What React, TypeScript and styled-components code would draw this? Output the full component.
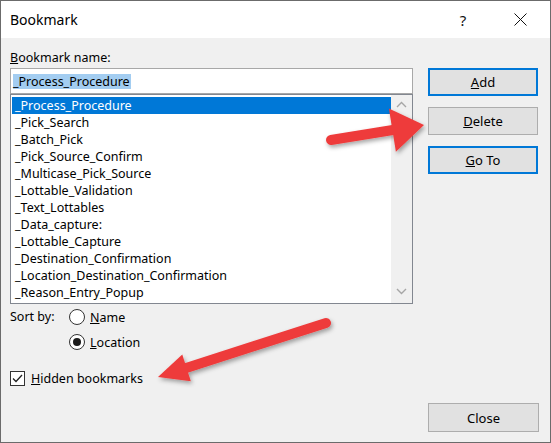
import { createGlobalStyle, styled } from 'styled-components'

const GlobalStyle = createGlobalStyle`
    html, body {
        margin: 0;
        padding: 0;
        background: #ffffff;
    }
`

const FONT = `'Noto Sans', 'Open Sans', sans-serif`

const Window = styled.div`
    position: relative;
    width: 551px;
    height: 443px;
    box-sizing: border-box;
    border: 1px solid #6b6b6b;
    background: #f0f0f0;
    display: flex;
    flex-direction: column;
    font-family: ${FONT};
    font-size: 12.5px;
    color: #000;
    overflow: hidden;
`

const TitleBar = styled.div`
    height: 37px;
    background: #fff;
    display: flex;
    align-items: center;
    padding-left: 9px;
    font-size: 14px;
`

const Title = styled.div`
    flex: 1;
`

const TitleButton = styled.div<{ w: number }>`
    width: ${({ w }) => w}px;
    height: 37px;
    display: flex;
    align-items: center;
    justify-content: center;
    font-size: 15px;
    color: #111;
`

const Body = styled.div`
    flex: 1;
    display: flex;
    padding: 0 10px 10px 9px;
    gap: 15px;
`

const LeftCol = styled.div`
    width: 403px;
    display: flex;
    flex-direction: column;
`

const Label = styled.div`
    height: 20px;
    padding-top: 10px;
    line-height: 20px;
`

const NameInput = styled.div`
    height: 24px;
    border: 1px solid #a8a8a8;
    background: #fff;
    display: flex;
    align-items: center;
    padding-left: 2px;
`

const Highlight = styled.span`
    background: #a3cdf1;
    line-height: 15px;
    padding: 0 1px 0 0;
`

const ListBox = styled.div`
    height: 208px;
    border: 1px solid #828790;
    background: #fff;
    display: flex;
`

const Rows = styled.div`
    flex: 1;
    padding: 2px 0 0 1px;
`

const Row = styled.div<{ selected?: boolean }>`
    height: 17px;
    line-height: 17px;
    padding-left: 3px;
    background: ${({ selected }) => (selected ? '#0078d7' : 'transparent')};
    color: ${({ selected }) => (selected ? '#fff' : '#000')};
    white-space: nowrap;
`

const ScrollTrack = styled.div`
    width: 21px;
    background: #f0f0f0;
    display: flex;
    flex-direction: column;
    justify-content: space-between;
    align-items: center;
    padding: 6px 0 8px 0;
`

const SortRow = styled.div`
    display: flex;
    margin-top: 3px;
`

const SortLabel = styled.div`
    width: 59px;
    height: 20px;
    line-height: 20px;
`

const RadioGroup = styled.div`
    display: flex;
    flex-direction: column;
    gap: 5px;
`

const Option = styled.label`
    display: flex;
    align-items: center;
    height: 20px;
    gap: 5px;
`

const RadioCircle = styled.span<{ checked?: boolean }>`
    width: 14px;
    height: 14px;
    border: 1px solid #333;
    border-radius: 50%;
    background: #fff;
    display: flex;
    align-items: center;
    justify-content: center;

    &::after {
        content: '';
        width: 8px;
        height: 8px;
        border-radius: 50%;
        background: #1a1a1a;
        display: ${({ checked }) => (checked ? 'block' : 'none')};
    }
`

const CheckRow = styled.label`
    display: flex;
    align-items: center;
    gap: 6px;
    margin-top: 16px;
    height: 20px;
`

const CheckBox = styled.span`
    width: 13px;
    height: 13px;
    border: 1px solid #333;
    background: #fff;
    display: flex;
    align-items: center;
    justify-content: center;
`

const RightCol = styled.div`
    width: 111px;
    display: flex;
    flex-direction: column;
    gap: 11px;
    padding-top: 30px;
    font-size: 13px;
`

const Button = styled.div<{ focused?: boolean }>`
    width: 110px;
    height: 28px;
    box-sizing: border-box;
    background: #e1e1e1;
    border: ${({ focused }) => (focused ? '2px solid #0078d7' : '1px solid #adadad')};
    display: flex;
    align-items: center;
    justify-content: center;
`

const CloseButton = styled(Button)`
    width: 111px;
    height: 29px;
    margin-top: auto;
`

const Overlay = styled.svg`
    position: absolute;
    left: -1px;
    top: -1px;
    pointer-events: none;
`

const bookmarks = [
    '_Process_Procedure',
    '_Pick_Search',
    '_Batch_Pick',
    '_Pick_Source_Confirm',
    '_Multicase_Pick_Source',
    '_Lottable_Validation',
    '_Text_Lottables',
    '_Data_capture:',
    '_Lottable_Capture',
    '_Destination_Confirmation',
    '_Location_Destination_Confirmation',
    '_Reason_Entry_Popup',
]

const Chevron = ({ up }: { up?: boolean }) => (
    <svg width="11" height="7" viewBox="0 0 11 7">
        <path
            d={up ? 'M1 6 L5.5 1.5 L10 6' : 'M1 1 L5.5 5.5 L10 1'}
            fill="none"
            stroke="#a6a6a6"
            strokeWidth="1.4"
        />
    </svg>
)

// red callout arrow: tail -> tip
const Arrow = ({
    tx,
    ty,
    px,
    py,
    head,
    half,
}: {
    tx: number
    ty: number
    px: number
    py: number
    head: number
    half: number
}) => {
    const dx = px - tx
    const dy = py - ty
    const len = Math.hypot(dx, dy)
    const ux = dx / len
    const uy = dy / len
    const nx = -uy
    const ny = ux
    const bx = px - ux * head
    const by = py - uy * head
    const pts = [
        [px, py],
        [bx + nx * half, by + ny * half],
        [bx - nx * half, by - ny * half],
    ]
        .map(p => p.join(','))
        .join(' ')
    return (
        <g filter="url(#shadow)">
            <line
                x1={tx}
                y1={ty}
                x2={bx + ux * 2}
                y2={by + uy * 2}
                stroke="#ee3b3b"
                strokeWidth="10"
                strokeLinecap="round"
            />
            <polygon points={pts} fill="#ee3b3b" />
        </g>
    )
}

export default function App() {
    return (
        <>
            <GlobalStyle />
            <Window>
                <TitleBar>
                    <Title>Bookmark</Title>
                    <TitleButton w={58}>?</TitleButton>
                    <TitleButton w={56}>
                        <svg width="13" height="13" viewBox="0 0 13 13">
                            <path d="M0.5 0.5 L12.5 12.5 M12.5 0.5 L0.5 12.5" stroke="#111" strokeWidth="1" />
                        </svg>
                    </TitleButton>
                    <div style={{ width: 2 }} />
                </TitleBar>
                <Body>
                    <LeftCol>
                        <Label>
                            <u>B</u>ookmark name:
                        </Label>
                        <NameInput>
                            <Highlight>_Process_Procedure</Highlight>
                        </NameInput>
                        <ListBox>
                            <Rows>
                                {bookmarks.map((b, i) => (
                                    <Row key={b} selected={i === 0}>
                                        {b}
                                    </Row>
                                ))}
                            </Rows>
                            <ScrollTrack>
                                <Chevron up />
                                <Chevron />
                            </ScrollTrack>
                        </ListBox>
                        <SortRow>
                            <SortLabel>Sort by:</SortLabel>
                            <RadioGroup>
                                <Option>
                                    <RadioCircle />
                                    <span>
                                        <u>N</u>ame
                                    </span>
                                </Option>
                                <Option>
                                    <RadioCircle checked />
                                    <span>
                                        <u>L</u>ocation
                                    </span>
                                </Option>
                            </RadioGroup>
                        </SortRow>
                        <CheckRow>
                            <CheckBox>
                                <svg width="11" height="9" viewBox="0 0 11 9">
                                    <path d="M1 4.5 L4 7.5 L10 1" fill="none" stroke="#222" strokeWidth="1.3" />
                                </svg>
                            </CheckBox>
                            <span>
                                <u>H</u>idden bookmarks
                            </span>
                        </CheckRow>
                    </LeftCol>
                    <RightCol>
                        <Button focused>
                            <span>
                                <u>A</u>dd
                            </span>
                        </Button>
                        <Button>
                            <span>
                                <u>D</u>elete
                            </span>
                        </Button>
                        <Button focused>
                            <span>
                                <u>G</u>o To
                            </span>
                        </Button>
                        <CloseButton>Close</CloseButton>
                    </RightCol>
                </Body>
                <Overlay width="551" height="443" viewBox="0 0 551 443">
                    <defs>
                        <filter id="shadow" x="-20%" y="-40%" width="140%" height="180%">
                            <feDropShadow dx="1.5" dy="2.5" stdDeviation="2" floodColor="#000" floodOpacity="0.35" />
                        </filter>
                    </defs>
                    <Arrow tx={331} ty={140} px={424} py={125} head={32} half={22} />
                    <Arrow tx={326} ty={323} px={158} py={377} head={30} half={14} />
                </Overlay>
            </Window>
        </>
    )
}
